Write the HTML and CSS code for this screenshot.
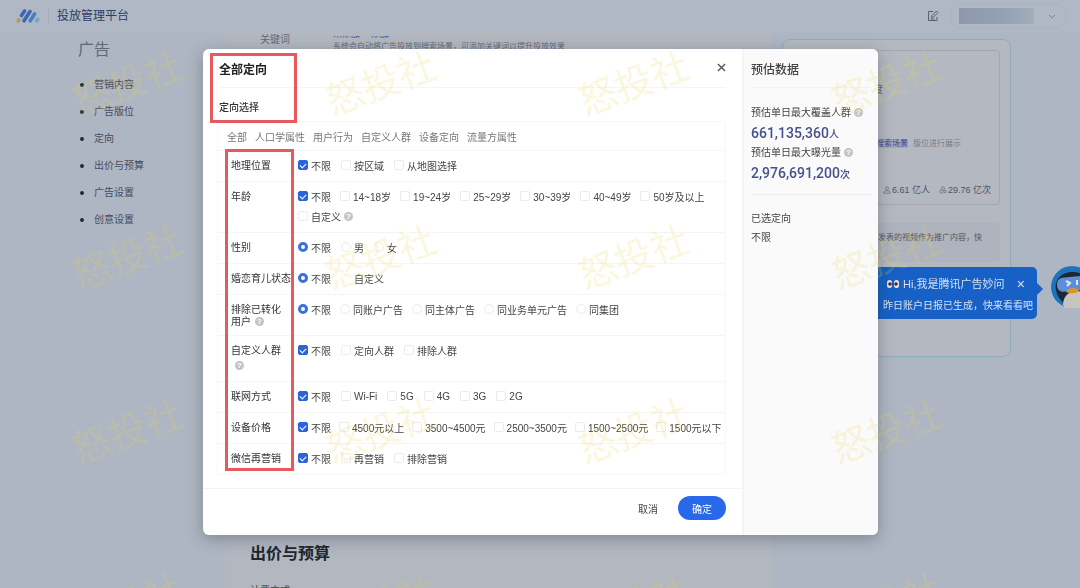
FILE: index.html
```html
<!DOCTYPE html>
<html lang="zh-CN">
  <head>
    <meta charset="UTF-8" />
    <meta name="viewport" content="width=device-width,initial-scale=1.0" />
    <title>投放管理平台</title>
    <link rel="stylesheet" href="styles.css">
  </head>
  <body>
    <header class="topbar">
      <svg class="logo" viewBox="0 0 24 16" aria-hidden="true">
        <g fill="none" stroke-linecap="round" stroke-width="3.6">
          <path stroke="#b9975a" d="M2.2 12.8l.6-.8" />
          <path stroke="#3f66b5" d="M5.5 7.5L8.6 3" />
          <path stroke="#3f66b5" d="M8 12.8L14 3.6" />
          <path stroke="#4a7cc4" d="M14.2 12.8L18.6 6" />
          <path stroke="#7ba3cf" d="M20.6 12.8l1-1.6" />
        </g>
      </svg>
      <span class="brand">投放管理平台</span>
      <button class="icon-btn" aria-label="编辑">
        <svg viewBox="0 0 12 12" fill="none" stroke="#5a6270">
          <path d="M6 1.5H1.5v9h8.500V7" />
          <path d="M4.500 7.500l.5-2L9.500 1l1.500 1.500-4.500 4.500zM3.500 9h4" />
        </svg>
      </button>
      <button class="account" aria-label="账户">
        <span class="account-name"></span>
        <svg viewBox="0 0 10 10" fill="none" stroke="#7b8797"><path d="M2 4l3 3 3-3" /></svg>
      </button>
    </header>

    <div class="page">
      <nav class="side">
        <h2>广告</h2>
        <ul>
          <li><a href="#content">营销内容</a></li>
          <li><a href="#position">广告版位</a></li>
          <li><a href="#target">定向</a></li>
          <li><a href="#bid">出价与预算</a></li>
          <li><a href="#setting">广告设置</a></li>
          <li><a href="#creative">创意设置</a></li>
        </ul>
      </nav>

      <main class="main">
        <section class="keyword">
          <span>关键词</span>
          <div>
            <p class="links"><a href="#add">未添加</a><a href="#rec">添加</a></p>
            <p class="hint">系统会自动将广告投放到搜索场景，可添加关键词以提升投放效果</p>
          </div>
        </section>
        <section class="bid" id="bid">
          <h2>出价与预算</h2>
          <p>计费方式</p>
        </section>
      </main>

      <aside class="preview">
        <div class="preview-card">
          <p class="preview-title">预估每日覆盖度</p>
          <p class="preview-scene">将在 <mark>搜索场景</mark>版位进行展示</p>
          <p class="preview-stats">
            <svg viewBox="0 0 10 10" fill="none" stroke="#6d7480"><circle cx="5" cy="3" r="2" /><path d="M1 9V7.500L3 6h4l2 1.500V9z" /></svg>
            <span>6.61 亿人</span>
            <svg class="gap" viewBox="0 0 10 10" fill="none" stroke="#6d7480"><circle cx="5" cy="3" r="2" /><circle cx="3" cy="7" r="2" /><circle cx="7.500" cy="7" r="1.500" /></svg>
            <span>29.76 亿次</span>
          </p>
        </div>
        <p class="tip">发表的视频作为推广内容，快</p>
      </aside>
    </div>

    <div class="bubble">
      <p class="bubble-title">
        <svg viewBox="0 0 14 10" aria-hidden="true">
          <rect x="1" y="1" width="5" height="8" rx="2.500" fill="#e9e4e4" /><rect x="8" y="1" width="5" height="8" rx="2.500" fill="#e9e4e4" />
          <circle cx="4" cy="5" r="1.800" fill="#5a2626" /><circle cx="10" cy="5" r="1.800" fill="#5a2626" />
        </svg>
        <span>Hi,我是腾讯广告妙问</span>
        <button aria-label="关闭提示">×</button>
      </p>
      <p>昨日账户日报已生成，快来看看吧</p>
    </div>
    <svg class="mascot" viewBox="0 0 42 42" aria-hidden="true">
      <circle cx="21" cy="21" r="21" fill="#1c74be" />
      <path d="M5 24C3 13 11 6 22 6s18 8 17 18-6 16-14 18c-6 0-11-2-13-5C9 33 6 30 5 24z" fill="#1f2733" />
      <path d="M12 39c0-7 4-13 12-14l16 1v16H14z" fill="#c7c5c0" />
      <rect x="6" y="11" width="30" height="14" rx="6" fill="#5c8fd8" transform="rotate(-6 20 18)" />
      <path d="M15 15l4 2-3 3M26 14v5" fill="none" stroke="#dce8f6" stroke-width="2" />
      <path d="M15 26c2-5 11-5 13-1-3 3-9 3-13 1z" fill="#d8952c" />
    </svg>

    <div class="overlay">
      <div class="modal" role="dialog" aria-labelledby="modal-title">
        <div class="modal-main">
          <div class="modal-head">
            <h1 id="modal-title">全部定向</h1>
            <button class="close" aria-label="关闭">
              <svg viewBox="0 0 10 10" fill="none" stroke="#555" stroke-width="1.500"><path d="M1 1l8 8M9 1L1 9" /></svg>
            </button>
          </div>
          <h3>定向选择</h3>

          <form class="targeting" id="targeting">
            <div class="tabs">
              <a href="#all">全部</a>
              <a href="#people">人口学属性</a>
              <a href="#behavior">用户行为</a>
              <a href="#custom">自定义人群</a>
              <a href="#device">设备定向</a>
              <a href="#flow">流量方属性</a>
            </div>
            <div class="row">
              <span class="name">地理位置</span>
              <div class="options">
                <label><input type="checkbox" checked />不限</label>
                <label><input type="checkbox" />按区域</label>
                <label><input type="checkbox" />从地图选择</label>
              </div>
            </div>
            <div class="row">
              <span class="name">年龄</span>
              <div class="options tight">
                <label><input type="checkbox" checked />不限</label>
                <label><input type="checkbox" />14~18岁</label>
                <label><input type="checkbox" />19~24岁</label>
                <label><input type="checkbox" />25~29岁</label>
                <label><input type="checkbox" />30~39岁</label>
                <label><input type="checkbox" />40~49岁</label>
                <label><input type="checkbox" />50岁及以上</label>
                <label><input type="checkbox" />自定义<i class="help">?</i></label>
              </div>
            </div>
            <div class="row">
              <span class="name">性别</span>
              <div class="options">
                <label><input type="radio" name="gender" checked />不限</label>
                <label><input type="radio" name="gender" />男</label>
                <label><input type="radio" name="gender" />女</label>
              </div>
            </div>
            <div class="row">
              <span class="name">婚恋育儿状态</span>
              <div class="options">
                <label><input type="radio" name="marriage" checked />不限</label>
                <label><input type="radio" name="marriage" class="plain" />自定义</label>
              </div>
            </div>
            <div class="row">
              <span class="name">排除已转化<br />用户<i class="help">?</i></span>
              <div class="options tight">
                <label><input type="radio" name="exclude" checked />不限</label>
                <label><input type="radio" name="exclude" />同账户广告</label>
                <label><input type="radio" name="exclude" />同主体广告</label>
                <label><input type="radio" name="exclude" />同业务单元广告</label>
                <label><input type="radio" name="exclude" />同集团</label>
              </div>
            </div>
            <div class="row">
              <span class="name loose">自定义人群 <i class="help">?</i></span>
              <div class="options">
                <label><input type="checkbox" checked />不限</label>
                <label><input type="checkbox" />定向人群</label>
                <label><input type="checkbox" />排除人群</label>
              </div>
            </div>
            <div class="row">
              <span class="name">联网方式</span>
              <div class="options">
                <label><input type="checkbox" checked />不限</label>
                <label><input type="checkbox" />Wi-Fi</label>
                <label><input type="checkbox" />5G</label>
                <label><input type="checkbox" />4G</label>
                <label><input type="checkbox" />3G</label>
                <label><input type="checkbox" />2G</label>
              </div>
            </div>
            <div class="row">
              <span class="name">设备价格</span>
              <div class="options tighter">
                <label><input type="checkbox" checked />不限</label>
                <label><input type="checkbox" />4500元以上</label>
                <label><input type="checkbox" />3500~4500元</label>
                <label><input type="checkbox" />2500~3500元</label>
                <label><input type="checkbox" />1500~2500元</label>
                <label><input type="checkbox" />1500元以下</label>
              </div>
            </div>
            <div class="row">
              <span class="name">微信再营销</span>
              <div class="options">
                <label><input type="checkbox" checked />不限</label>
                <label><input type="checkbox" />再营销</label>
                <label><input type="checkbox" />排除营销</label>
              </div>
            </div>
          </form>

          <div class="modal-foot">
            <button class="btn">取消</button>
            <button class="btn primary">确定</button>
          </div>
        </div>

        <aside class="estimate">
          <h2>预估数据</h2>
          <div class="figures">
            <p>预估单日最大覆盖人群<i class="help">?</i></p>
            <p class="num">661,135,360<small>人</small></p>
            <p>预估单日最大曝光量<i class="help">?</i></p>
            <p class="num">2,976,691,200<small>次</small></p>
          </div>
          <div class="chosen">
            <p>已选定向</p>
            <p>不限</p>
          </div>
        </aside>

        <div class="mark mark-title"></div>
        <div class="mark mark-names"></div>
      </div>
    </div>

    <div class="watermark" aria-hidden="true">
      <span>怒投社</span><span>怒投社</span><span>怒投社</span><span>怒投社</span>
      <span>怒投社</span><span>怒投社</span><span>怒投社</span><span>怒投社</span>
      <span>怒投社</span><span>怒投社</span><span>怒投社</span><span>怒投社</span>
      <span>怒投社</span><span>怒投社</span><span>怒投社</span><span>怒投社</span>
    </div>
  </body>
</html>
```
FILE: styles.css
```css
* {
  box-sizing: border-box;
}
body {
  margin: 0;
  height: 100vh;
  overflow: hidden;
  font-family: "Liberation Sans", "Noto Sans CJK SC", sans-serif;
  font-size: 10px;
  color: #444;
  background: #afb6c3;
}
h1,
h2,
h3,
p,
ul {
  margin: 0;
  padding: 0;
}
a {
  color: inherit;
  text-decoration: none;
}
button {
  font: inherit;
  color: inherit;
  background: none;
  border: none;
  padding: 0;
  cursor: pointer;
}
/* top bar */
.topbar {
  display: flex;
  align-items: center;
  height: 32px;
  padding: 0 13px 0 16px;
  background: #afb8c4;
}
.logo {
  width: 24px;
  height: 16px;
}
.brand {
  margin-left: 8px;
  padding-left: 8px;
  border-left: 1px solid #a3acba;
  font-size: 12px;
  line-height: 14px;
  color: #2d3c68;
}
.icon-btn {
  margin-left: auto;
  width: 12px;
  height: 12px;
}
.icon-btn svg,
.close svg {
  display: block;
}
.account {
  display: flex;
  align-items: center;
  gap: 13px;
  margin-left: 11px;
  padding: 0 9px 0 8px;
  height: 26px;
  border: 1px solid #a9b4c2;
  border-radius: 13px;
}
.account-name {
  width: 75px;
  height: 16px;
  background: linear-gradient(90deg, #8d99a8, #95a2b5 60%, #a2adbb);
}
.account svg {
  width: 10px;
  height: 10px;
}
/* page behind the dialog */
.page {
  display: flex;
  height: calc(100vh - 32px);
}
.side {
  width: 225px;
  flex: none;
  padding: 6px 0 0 78px;
  color: #434d63;
}
.side h2 {
  font-size: 16px;
  font-weight: normal;
  line-height: 24px;
  color: #616876;
}
.side ul {
  margin-top: 9px;
  padding-left: 16px;
}
.side li {
  line-height: 27px;
}
.side li::marker {
  color: #222a3a;
  font-size: 12px;
}
.main {
  flex: 1;
  display: flex;
  flex-direction: column;
  justify-content: space-between;
  overflow: hidden;
  background: #b2b7c0;
}
.keyword {
  display: flex;
  gap: 43px;
  padding-left: 35px;
  color: #646b77;
  line-height: 16px;
}
.keyword .links {
  display: flex;
  align-items: flex-end;
  gap: 11px;
  height: 4px;
  margin-top: 4px;
  font-size: 9px;
  line-height: 12px;
  overflow: hidden;
  color: #41579a;
}
.keyword .hint {
  font-size: 8px;
  line-height: 14px;
}
.bid {
  height: 52px;
  padding-left: 25px;
}
.bid h2 {
  font-size: 16px;
  line-height: 36px;
  color: #20252e;
}
.bid p {
  margin-top: 12px;
  line-height: 14px;
}
.preview {
  width: 229px;
  height: 318px;
  flex: none;
  margin: 7px 69px 0 10px;
  padding: 10px;
  border: 1px solid #8fabba;
  border-radius: 8px;
  background: #b4b9c1;
  color: #4f5560;
}
.preview-card {
  height: 155px;
  padding: 30px 8px 0;
  border: 1px solid #a2a6b0;
  border-radius: 4px;
  text-align: right;
}
.preview-title {
  padding-right: 108px;
  line-height: 18px;
}
.preview-scene {
  margin-top: 36px;
  padding-right: 30px;
  font-size: 8px;
  line-height: 18px;
  color: #747a86;
}
.preview-scene mark {
  margin-right: 5px;
  background: #a4aac6;
  color: #3e4885;
}
.preview-stats {
  display: flex;
  justify-content: flex-end;
  align-items: center;
  gap: 1px;
  margin-top: 28px;
  font-size: 9px;
  line-height: 18px;
}
.preview-stats svg {
  width: 8px;
  height: 8px;
}
.preview-stats .gap {
  margin-left: 8px;
}
.tip {
  margin-top: 17px;
  height: 40px;
  padding-right: 18px;
  border-radius: 4px;
  background: #afb3be;
  font-size: 8px;
  line-height: 32px;
  text-align: right;
}
.bubble {
  position: fixed;
  top: 267px;
  right: 43px;
  width: 168px;
  height: 52px;
  padding: 6px 4px 0 14px;
  border-radius: 5px;
  background: #1660c6;
  color: #d5e1f2;
  line-height: 22px;
}
.bubble::after {
  content: "";
  position: absolute;
  top: 16px;
  right: -6px;
  border: 6px solid transparent;
  border-left-color: #1660c6;
  border-right: none;
}
.bubble-title {
  display: flex;
  align-items: center;
  font-size: 11px;
}
.bubble-title svg {
  width: 14px;
  height: 10px;
  margin: 0 3px;
}
.bubble-title button {
  margin: 0 8px 0 auto;
  font-size: 14px;
}
.mascot {
  position: fixed;
  top: 266px;
  right: -13px;
  width: 42px;
  height: 42px;
}
/* dialog */
.overlay {
  position: fixed;
  inset: 0;
  display: flex;
  align-items: center;
  justify-content: center;
  padding-left: 1px;
}
.modal {
  position: relative;
  display: flex;
  width: 675px;
  max-width: 94%;
  margin-top: -4px;
  border-radius: 6px;
  background: #fff;
  box-shadow: 0 4px 16px rgba(40, 45, 60, 0.35);
}
.modal-main {
  flex: 1;
  min-width: 0;
}
.modal-head {
  display: flex;
  align-items: center;
  justify-content: space-between;
  height: 39px;
  margin: 0 16px;
  padding-top: 3px;
  border-bottom: 1px solid #f5f5f5;
}
.modal-head h1 {
  font-size: 12px;
  line-height: 16px;
  color: #222;
}
.close {
  width: 9px;
  height: 9px;
  margin-bottom: 5px;
}
.modal h3 {
  padding: 6px 16px 0;
  font-size: 10px;
  font-weight: 500;
  line-height: 27px;
  color: #333;
}
.targeting {
  margin: 0 16px 0 14px;
  border: 1px solid #f7f7f7;
  border-radius: 4px;
}
.tabs {
  display: flex;
  gap: 8px;
  padding: 4px 0 0 9px;
  line-height: 24px;
  color: #777;
}
.row {
  display: flex;
  gap: 7px;
  padding-left: 13px;
  border-top: 1px solid #f5f5f5;
}
.name {
  width: 60px;
  flex: none;
  padding: 9px 0 7px;
  line-height: 12px;
  color: #333;
}
.name.loose {
  padding: 7px 0 8px;
  line-height: 15px;
}
.options {
  display: flex;
  flex-wrap: wrap;
  column-gap: 10px;
  padding: 4px 0 6px;
}
.options.tight {
  column-gap: 9px;
}
.options.tighter {
  column-gap: 8px;
}
.options label {
  display: flex;
  align-items: center;
  gap: 3px;
  height: 20px;
  white-space: nowrap;
}
.options input {
  appearance: none;
  display: grid;
  place-items: center;
  width: 10px;
  height: 10px;
  margin: 0;
  border: 1px solid #ececec;
  border-radius: 2px;
  background: #fff;
}
.options input[type="radio"] {
  border-radius: 50%;
}
.options input.plain {
  border-color: #fff;
}
.options input[type="checkbox"]:checked {
  border-color: #2a63dc;
  background: #2a63dc;
}
.options input[type="checkbox"]:checked::after {
  content: "";
  width: 5px;
  height: 3px;
  border: solid #fff;
  border-width: 0 0 1px 1px;
  transform: rotate(-45deg);
}
.options input[type="radio"]:checked {
  border: 3px solid #3a6fe0;
}
.help {
  display: inline-block;
  width: 9px;
  height: 9px;
  margin-left: 4px;
  border-radius: 50%;
  background: #c4c4c4;
  color: #fff;
  font-size: 8px;
  font-style: normal;
  font-weight: bold;
  line-height: 9px;
  text-align: center;
  vertical-align: 1px;
}
.options .help {
  margin-left: 0;
}
.modal-foot {
  display: flex;
  justify-content: flex-end;
  gap: 6px;
  margin-top: 13px;
  padding: 7px 16px 15px;
  border-top: 1px solid #f3f3f3;
}
.btn {
  width: 48px;
  height: 24px;
  border-radius: 12px;
}
.btn.primary {
  background: #2a68ea;
  color: #fff;
}
.estimate {
  width: 136px;
  flex: none;
  padding: 0 7px;
  border-left: 2px solid #f4f4f4;
  border-radius: 0 6px 6px 0;
  background: #fafafa;
}
.estimate h2 {
  height: 39px;
  border-bottom: 1px solid #f3f3f3;
  font-size: 12px;
  font-weight: 500;
  line-height: 42px;
}
.figures {
  padding: 15px 0 11px;
  border-bottom: 1px solid #ededed;
  line-height: 20px;
}
.figures p {
  height: 20px;
  white-space: nowrap;
}
.figures .help {
  margin-left: 3px;
}
.figures .num {
  font-family: Roboto, "Noto Sans CJK SC", sans-serif;
  font-size: 14px;
  font-weight: 500;
  color: #46508a;
}
.figures small {
  font-size: 10px;
}
.chosen {
  padding-top: 14px;
  line-height: 19px;
}
.mark {
  position: absolute;
  border: 3px solid #e8585c;
  pointer-events: none;
}
.mark-title {
  top: 4px;
  left: 7px;
  width: 87px;
  height: 70px;
}
.mark-names {
  top: 100px;
  left: 22px;
  width: 69px;
  height: 322px;
}
.watermark {
  position: fixed;
  inset: -3px 0 0 2px;
  display: grid;
  grid-template-columns: repeat(4, 253px);
  grid-auto-rows: 174px;
  place-items: center;
  overflow: hidden;
  pointer-events: none;
}
.watermark span {
  font-size: 38px;
  line-height: 40px;
  color: rgba(230, 212, 80, 0.19);
  transform: rotate(-20deg);
}
```
